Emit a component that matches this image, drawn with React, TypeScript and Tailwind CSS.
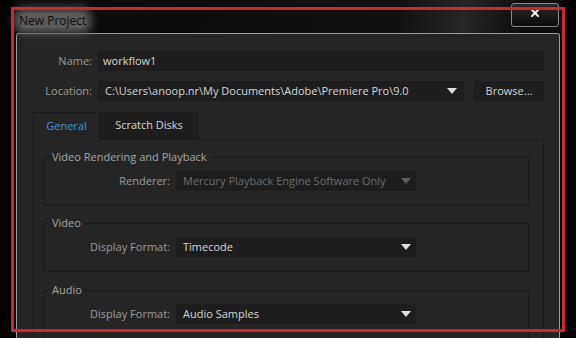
import { X } from 'lucide-react'

function Arrow({ dim }: { dim?: boolean }) {
  return (
    <svg width="10" height="6" viewBox="0 0 10 6" className="shrink-0">
      <path d="M0 0H10L5 6Z" fill={dim ? '#5c5c5c' : '#e0e0e0'} />
    </svg>
  )
}

function Select({ value, dim }: { value: string; dim?: boolean }) {
  return (
    <div className="flex h-[20px] w-[240px] items-center justify-between bg-[#1d1d1d] pl-[7px] pr-[5px]">
      <span className={dim ? 'text-[#6e6e6e]' : 'text-[#d6d6d6]'}>{value}</span>
      <Arrow dim={dim} />
    </div>
  )
}

function Group({ title, label, value, dim, className }: { title: string; label: string; value: string; dim?: boolean; className?: string }) {
  return (
    <fieldset className={`border border-[#191919] pt-[6px] pb-[14px] ${className ?? ''}`}>
      <legend className="ml-[5px] px-[3px] leading-[16px] text-[#a6a6a6]">{title}</legend>
      <div className="flex items-center gap-[6px]">
        <span className="w-[126px] text-right text-[#9c9c9c]">{label}</span>
        <Select value={value} dim={dim} />
      </div>
    </fieldset>
  )
}

export default function App() {
  return (
    <div className="relative h-[338px] w-[576px] overflow-hidden bg-black px-[14px] font-['Open_Sans',sans-serif] text-[11px]">
      <div className="flex h-[33px] items-start bg-[linear-gradient(100deg,#0a0a0a_0%,#111_70%,#262626_82%,#0e0e0e_92%)]">
        <div className="mt-[13px] ml-[5px] rounded-[6px] bg-[#5a5a5a] text-[12px] leading-[15px] text-[#0c0c0c] shadow-[0_0_8px_6px_#555]">
          New Project
        </div>
        <div className="mt-[3px] mr-[3px] ml-auto flex h-[24px] w-[48px] items-center justify-center rounded-[3px] border border-[#8a8a8a] bg-[linear-gradient(#2a2a2a,#0c0c0c)]">
          <X size={12} strokeWidth={4} color="#f2f2f2" className="mb-[4px]" />
        </div>
      </div>
      <div className="mx-[2px] h-[320px] rounded-t-[3px] border border-b-0 border-[#9a9a9a] bg-[#252525] pt-[17px] pr-[15px]">
        <div className="flex items-center gap-[6px]">
          <span className="w-[75px] text-right text-[#9c9c9c]">Name:</span>
          <div className="flex h-[20px] flex-1 items-center bg-[#1d1d1d] pl-[5px] text-[#d6d6d6]">workflow1</div>
        </div>
        <div className="mt-[10px] flex items-center gap-[6px]">
          <span className="w-[75px] text-right text-[#9c9c9c]">Location:</span>
          <div className="flex h-[20px] flex-1 items-center justify-between bg-[#1d1d1d] pl-[7px] pr-[7px] text-[#d6d6d6]">
            <span>C:\Users\anoop.nr\My Documents\Adobe\Premiere Pro\9.0</span>
            <Arrow />
          </div>
          <div className="ml-[4px] flex h-[20px] w-[70px] items-center justify-center bg-[#1d1d1d] text-[#d6d6d6]">Browse...</div>
        </div>
        <div className="mt-[11px] ml-[16px]">
          <div className="flex h-[28px]">
            <div className="flex w-[67px] items-center justify-center border border-b-0 border-[#191919] bg-[#252525] text-[#3f9bd6]">General</div>
            <div className="flex w-[98px] items-center justify-center border-b border-[#191919] bg-[#1d1d1d] text-[#d6d6d6]">Scratch Disks</div>
            <div className="flex-1 border-b border-[#191919]" />
          </div>
          <div className="h-[200px] border-x border-[#191919] pt-[9px] pr-[14px] pl-[9px]">
            <Group title="Video Rendering and Playback" label="Renderer:" value="Mercury Playback Engine Software Only" dim />
            <Group title="Video" label="Display Format:" value="Timecode" className="mt-[9px]" />
            <Group title="Audio" label="Display Format:" value="Audio Samples" className="mt-[10px]" />
          </div>
        </div>
      </div>
      <div className="absolute top-[7px] left-[11px] h-[325px] w-[554px] border-[3px] border-[#d3252b]" />
    </div>
  )
}
